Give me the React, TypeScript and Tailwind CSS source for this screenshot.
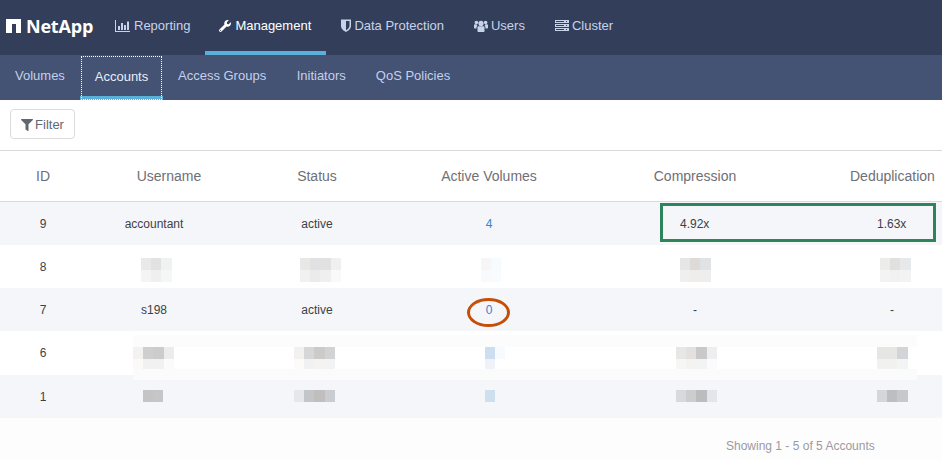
import { FaFilter, FaWrench } from 'react-icons/fa';

type Cells = string[][];

function ChartIcon() {
  return (
    <svg viewBox="0 0 15 12" className="h-[12px] w-[15px]" fill="currentColor">
      <path d="M0 0h1v11h14v1H0z" />
      <path d="M3 6h2v4H3zM6 3h2v7H6zM9 5h2v5H9zM12 1.500h2V10h-2z" />
    </svg>
  );
}

function ShieldIcon() {
  return (
    <svg viewBox="0 0 10 13" className="h-[13px] w-[10px]" fill="currentColor" fillRule="evenodd">
      <path d="M0 .5h10v6.500c0 3-3 5-5 6-2-1-5-3-5-6zM5 2v9.300c1.500-.8 3.500-2.400 3.500-4.300V2z" />
    </svg>
  );
}

function UsersIcon() {
  return (
    <svg viewBox="0 0 14 12" className="h-[12px] w-[14px]" fill="currentColor">
      <circle cx="7" cy="3.400" r="2.600" />
      <circle cx="2.400" cy="2.500" r="1.800" />
      <circle cx="11.600" cy="2.500" r="1.800" />
      <path d="M3.500 7.500c0-1 .8-1.300 1.500-1.300h4c.7 0 1.500.3 1.500 1.300V11c0 .6-.4 1-1 1h-5c-.6 0-1-.4-1-1z" />
      <path d="M0 5.500c0-.8.500-1.200 1.200-1.200h1.500c0 .8.400 1.300.9 1.700-.6.300-1 .8-1.100 1.500V8.500H.8C.3 8.500 0 8.200 0 7.700zM14 5.500c0-.8-.5-1.200-1.200-1.200h-1.500c0 .8-.4 1.300-.9 1.700.6.300 1 .8 1.100 1.500V8.500h1.700c.5 0 .8-.3.800-.8z" />
    </svg>
  );
}

function ClusterIcon() {
  return (
    <svg viewBox="0 0 14 11" className="h-[11px] w-[14px]" fill="currentColor" fillRule="evenodd">
      <path d="M0 0h14v3H0zM1 1v1h8V1zM11 1v1h1V1z" />
      <path d="M0 4h14v3H0zM1 5v1h8V5zM11 5v1h1V5z" />
      <path d="M0 8h14v3H0zM1 9v1h8V9zM11 9v1h1V9z" />
    </svg>
  );
}

function Mosaic({ cells, className }: { cells: Cells; className: string }) {
  return (
    <div className={className}>
      {cells.map((row, r) => (
        <div key={r} className="flex h-[12px]">
          {row.map((color, c) => (
            // colours come from the data, so this one stays inline
            <div key={c} className="h-full w-[10.200px]" style={{ backgroundColor: color }} />
          ))}
        </div>
      ))}
    </div>
  );
}

const gridCols = 'grid grid-cols-[86px_166px_130px_214px_198px_148px]';

function HeaderRow() {
  const labels = ['Username', 'Status', 'Active Volumes', 'Compression'];
  return (
    <div className={`${gridCols} h-[51px] items-center border-b border-[#d9d9d9] text-[14px] text-[#6f6f76]`}>
      <div className="text-center">ID</div>
      {labels.map((label) => (
        <div key={label} className="text-center">{label}</div>
      ))}
      <div className="pl-[56px]">Deduplication</div>
    </div>
  );
}

function TextRow({ id, user, comp, dedup, volumes, striped }: { id: string; user: string; comp: string; dedup: string; volumes: string; striped: boolean }) {
  return (
    <div className={`${gridCols} h-[43px] items-center text-[12px] text-[#3f3f46] ${striped ? 'bg-[#f4f6fa]' : 'bg-white'}`}>
      <div className="text-center">{id}</div>
      <div className="pr-[30px] text-center">{user}</div>
      <div className="text-center">active</div>
      <div className="text-center text-[#3584cc]">{volumes}</div>
      <div className={comp === '-' ? 'text-center' : 'pl-[84px]'}>{comp}</div>
      <div className={dedup === '-' ? 'pl-[48px] text-center' : 'pl-[83px]'}>{dedup}</div>
    </div>
  );
}

function BlurRow({ id, striped, heightClass, offset, parts }: { id: string; striped: boolean; heightClass: string; offset: string; parts: { cells: Cells; className: string }[] }) {
  return (
    <div className={`${gridCols} ${heightClass} text-[12px] text-[#3f3f46] ${striped ? 'bg-[#f4f6fa]' : 'bg-white'}`}>
      <div className="flex items-center justify-center">{id}</div>
      {parts.map((part, i) => (
        <div key={i} className={offset}>
          <Mosaic cells={part.cells} className={part.className} />
        </div>
      ))}
    </div>
  );
}

export default function App() {
  return (
    <div className="flex h-[460px] w-[942px] flex-col overflow-hidden bg-white font-['Liberation_Sans',Arial,sans-serif]">
      <header className="flex h-[55px] bg-[#333f5a] text-[13px] text-[#c7d3e8]">
        <div className="flex w-[100px] items-center pb-[3px] pl-[6px] text-white">
          <svg viewBox="0 0 15 14" className="h-[14px] w-[15px]" fill="currentColor">
            <path d="M0 0h15v14H10V5H6v9H0z" />
          </svg>
          <span className="ml-[5px] font-['Open_Sans',sans-serif] text-[18px] font-bold leading-none tracking-[-0.2px]">NetApp</span>
        </div>
        <nav className="flex">
          <a className="flex items-center gap-[4px] px-[15px] pb-[4px]"><ChartIcon /> Reporting</a>
          <a className="flex w-[121px] items-center gap-[4px] border-b-[4px] border-[#5bb0d9] px-[14px] text-white"><FaWrench className="text-[12px]" /> Management</a>
          <a className="flex items-center gap-[3px] px-[15px] pb-[4px]"><ShieldIcon /> Data Protection</a>
          <a className="flex items-center gap-[3px] px-[15px] pb-[4px]"><UsersIcon /> Users</a>
          <a className="flex items-center gap-[3px] px-[15px] pb-[4px]"><ClusterIcon /> Cluster</a>
        </nav>
      </header>

      <div className="flex h-[45px] bg-[#445274] text-[13px] text-[#c3d1ea]">
        <a className="flex w-[80px] items-center px-[15px] pb-[4px]">Volumes</a>
        <a className="flex w-[83px] px-px pt-px shadow-[inset_0_-4px_0_#5bb0d9]">
          <span className="flex flex-1 items-center justify-center border border-dotted border-white pb-[3px] text-[#e8eef8]">Accounts</span>
        </a>
        <a className="flex items-center px-[15px] pb-[4px]">Access Groups</a>
        <a className="flex items-center pl-[15.500px] pr-[15px] pb-[4px]">Initiators</a>
        <a className="flex items-center px-[15px] pb-[4px]">QoS Policies</a>
      </div>

      <div className="flex h-[51px] items-center border-b border-[#d9d9d9] pb-[2px] pl-[10px]">
        <button className="flex h-[30px] w-[65px] items-center justify-center gap-[2px] rounded-[4px] border border-[#dcdcdc] bg-white pt-px text-[13px] text-[#5f6873]">
          <FaFilter className="text-[12px]" /> Filter
        </button>
      </div>

      <div className="relative">
        <HeaderRow />
        <TextRow id="9" user="accountant" volumes="4" comp="4.92x" dedup="1.63x" striped />
        <BlurRow
          id="8"
          striped={false}
          heightClass="h-[43px]"
          offset="pt-[13px]"
          parts={[
            { className: 'ml-[55px]', cells: [['#e9e9e9', '#e2e2e2', '#f0f1f1'], ['#f4f4f4', '#efefef', '#f5f6f6']] },
            { className: 'ml-[48px]', cells: [['#e9e8e7', '#e1e1e3', '#e1e1e1', '#eff0f2'], ['#f1f1f0', '#ebebec', '#efefef', '#f9f9f9']] },
            { className: 'ml-[99px]', cells: [['#f6f6f6', '#f6fbfd'], ['#f9fafb', '#f8fcfe']] },
            { className: 'ml-[84px]', cells: [['#e6e6e6', '#dcdbd9', '#e0e2e4'], ['#efefef', '#eeedec', '#eeeeee']] },
            { className: 'ml-[86px]', cells: [['#ececec', '#e1e0de', '#e6e8ea'], ['#f3f3f3', '#f1f1f0', '#f3f3f3']] },
          ]}
        />
        <TextRow id="7" user="s198" volumes="0" comp="-" dedup="-" striped />
        <BlurRow
          id="6"
          striped={false}
          heightClass="h-[44px]"
          offset="pt-[16px]"
          parts={[
            { className: 'ml-[47px]', cells: [['#f3f2f0', '#cfcfcf', '#cdcccb', '#ececec'], ['#fafaf8', '#f1f1f1', '#f1f1f1', '#fbfbfb']] },
            { className: 'ml-[42px]', cells: [['#f2f1ef', '#d6d7d8', '#cdcbc9', '#d2d3d5'], ['#fbfbfa', '#f1f1f2', '#f3f3f3', '#f3f3f4']] },
            { className: 'ml-[103px]', cells: [['#cddfee', '#f8fbfd'], ['#eff3f9', '#ffffff']] },
            { className: 'ml-[80px]', cells: [['#e8e7e7', '#e4e0e0', '#c9c9c9', '#eeeef0'], ['#f6f6f5', '#f3f3f2', '#f3f3f3', '#fbfbfb']] },
            { className: 'ml-[83px]', cells: [['#e6e6e4', '#e6e6e2', '#d3d3d8'], ['#f1f1ef', '#f1f2ef', '#f3f5f4']] },
          ]}
        />
        <BlurRow
          id="1"
          striped
          heightClass="h-[43px]"
          offset="pt-[15px]"
          parts={[
            { className: 'ml-[57px]', cells: [['#c4c4c4', '#c6c6c8']] },
            { className: 'ml-[42px]', cells: [['#e6e7e8', '#c4c5c9', '#c1bfbe', '#c9ccd0']] },
            { className: 'ml-[103px]', cells: [['#cfdfee']] },
            { className: 'ml-[80px]', cells: [['#d9d9dd', '#cdcdd0', '#babcbe', '#e2e5e9']] },
            { className: 'ml-[83px]', cells: [['#d5d6da', '#bebec0', '#c8c8cc']] },
          ]}
        />
        {/* faint edges of the redaction over rows 6 and 1 */}
        <div className="absolute left-[133px] top-[184px] h-[12px] w-[784px] bg-[#fcfcfc]" />
        <div className="absolute left-[133px] top-[218px] h-[11px] w-[784px] bg-[#fbfbfb]" />
        {/* hand drawn markers on top of the table */}
        <div className="absolute left-[660px] top-[52px] h-[39px] w-[276px] border-[3px] border-[#2e855c]" />
        <div className="absolute left-[467px] top-[147px] h-[29px] w-[43px] rounded-[50%] border-[3px] border-[#c64f08]" />
      </div>

      <div className="flex-1 bg-[#fdfdfd] pl-[726px] pt-[19px] text-[12px] text-[#9a9aa3]">Showing 1 - 5 of 5 Accounts</div>
    </div>
  );
}
